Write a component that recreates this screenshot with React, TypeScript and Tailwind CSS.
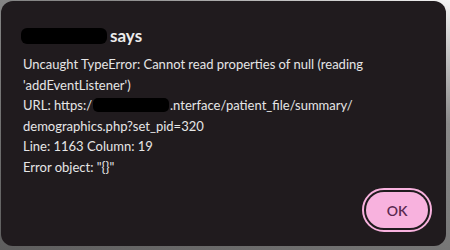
import React from "react";

export default function App() {
  return (
    <div className="w-[450px] h-[250px] bg-[linear-gradient(200deg,#f4f4f4_0%,#8a8a8a_30%,#5e5e5e_100%)] overflow-hidden" style={{ fontFamily: "Lato, 'Noto Sans', sans-serif" }}>
      <div className="ml-[1px] mt-[1px] w-[445px] h-[245px] rounded-[12px] bg-[#201b1e] flex flex-col pl-[22px] pr-[14px] pt-[24px] pb-[14px]">
        <div className="flex items-center h-[22px] text-[17px] font-bold text-[#ececec]">
          <span className="inline-block w-[86px] h-[16px] bg-black rounded-[6px] mr-[3px] -ml-[2px]" />
          <span>says</span>
        </div>
        <div className="mt-[7px] text-[13px] leading-[20.5px] text-[#e6e6e6]">
          <div>Uncaught TypeError: Cannot read properties of null (reading</div>
          <div>'addEventListener')</div>
          <div className="flex items-center">
            <span>URL: https:/</span>
            <span className="inline-block w-[76px] h-[14px] bg-black rounded-[5px] mx-[1px]" />
            <span>.nterface/patient_file/summary/</span>
          </div>
          <div>demographics.php?set_pid=320</div>
          <div>Line: 1163 Column: 19</div>
          <div>Error object: "{"{}"}"</div>
        </div>
        <div className="flex-1" />
        <div className="flex justify-end">
          <button className="w-[70px] h-[44px] rounded-full border-[2px] border-[#f8b2de] p-[2px] bg-[#201b1e]">
            <span className="flex w-full h-full items-center justify-center rounded-full bg-[#f8b2de] text-[14px] font-semibold text-[#5a2950]">OK</span>
          </button>
        </div>
      </div>
    </div>
  );
}
